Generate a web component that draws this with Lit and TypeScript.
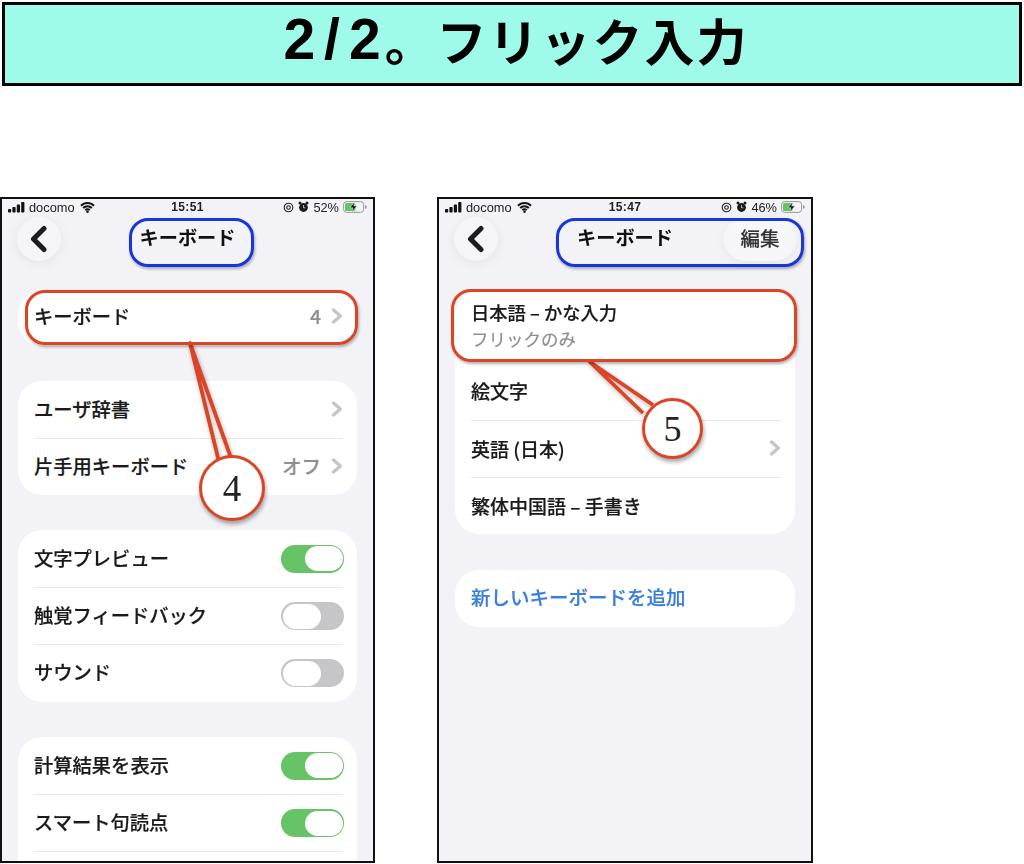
import { LitElement, html, css, svg } from 'lit';
import { customElement } from 'lit/decorators.js';

const chevron = html`<svg class="chev" width="12" height="16" viewBox="0 0 12 16"><path d="M2.5 2l6.8 6-6.8 6" fill="none" stroke="#c5c5c9" stroke-width="3.2" stroke-linecap="round" stroke-linejoin="round"/></svg>`;

const backIcon = html`<svg width="20" height="28" viewBox="0 0 20 28"><path d="M15 3.5L4.5 14 15 24.5" fill="none" stroke="#1c1c1e" stroke-width="5" stroke-linecap="round" stroke-linejoin="round"/></svg>`;

const statusBar = (time: string, pct: string) => html`
  <div class="status">
    <div class="st-left">
      <svg width="17" height="11" viewBox="0 0 17 11">
        <rect x="0" y="7" width="3.2" height="3.6" rx=".8" fill="#111"/>
        <rect x="4.4" y="5" width="3.2" height="5.6" rx=".8" fill="#111"/>
        <rect x="8.8" y="2.6" width="3.2" height="8" rx=".8" fill="#111"/>
        <rect x="13.2" y="0" width="3.2" height="10.6" rx=".8" fill="#111"/>
      </svg>
      <span>docomo</span>
      <svg class="wifi" width="15" height="11" viewBox="0 0 15 11">
        <path d="M1 3.8a9 9 0 0 1 13 0M3.2 6a6 6 0 0 1 8.6 0M5.3 8.1a3 3 0 0 1 4.4 0" fill="none" stroke="#111" stroke-width="2"/>
        <circle cx="7.5" cy="9.8" r="1.2" fill="#111"/>
      </svg>
    </div>
    <div class="st-time">${time}</div>
    <div class="st-right">
      <svg width="11" height="11" viewBox="0 0 11 11">
        <circle cx="5.5" cy="5.5" r="4.3" fill="none" stroke="#222" stroke-width="1.1"/>
        <circle cx="5.5" cy="5.5" r="1.8" fill="none" stroke="#222" stroke-width="1.1"/>
      </svg>
      <svg width="11" height="12" viewBox="0 0 11 12">
        <circle cx="5.5" cy="6.5" r="4.4" fill="#1a1a1a"/>
        <circle cx="2" cy="2" r="1.5" fill="#1a1a1a"/>
        <circle cx="9" cy="2" r="1.5" fill="#1a1a1a"/>
        <path d="M5.5 4v2.8h1.8" fill="none" stroke="#ddd" stroke-width=".8"/>
      </svg>
      <span class="pct">${pct}</span>
      <svg width="24" height="12" viewBox="0 0 24 12">
        <rect x=".6" y=".6" width="20" height="10.8" rx="3" fill="none" stroke="#999" stroke-width="1"/>
        <rect x="2" y="2" width="${pct === '52%' ? 10.5 : 9.5}" height="8" rx="1.6" fill="#62c462"/>
        <path d="M22 4.2v3.6a1.8 1.8 0 0 0 0-3.6z" fill="#999"/>
        <path d="M11.5 1L7 6.8h3L8.8 11 14 5h-3.2z" fill="#111" stroke="#f2f2f7" stroke-width=".5"/>
      </svg>
    </div>
  </div>
`;

const toggle = (on: boolean) => html`<div class="toggle ${on ? 'on' : 'off'}"><div class="thumb"></div></div>`;

const row = (label: string, right?: unknown) => html`
  <div class="row"><span class="label">${label}</span><span class="right">${right}</span></div>
`;

const valued = (value: string) => html`<span class="value">${value}</span>${chevron}`;

const legs = (ax: number, ay: number, bx: number, by: number, cx: number, cy: number) => svg`
  <path d="M${bx} ${by}L${ax} ${ay}L${cx} ${cy}" fill="none" stroke="#dc4426" stroke-width="3.8" stroke-linejoin="round"/>
`;

@customElement('app-root')
export class AppRoot extends LitElement {
  static styles = css`
    :host {
      display: block;
      width: 1024px;
      height: 864px;
      background: #fff;
      overflow: hidden;
      font-family: 'Noto Sans CJK JP', 'Liberation Sans', sans-serif;
      color: #111;
    }
    .banner {
      box-sizing: border-box;
      height: 84px;
      margin: 2px 2px 0;
      padding: 0 0 10px 8px;
      border: 3px solid #000;
      background: #9ffbe9;
      display: flex;
      align-items: center;
      justify-content: center;
      font-size: 50px;
      font-weight: 700;
      line-height: 1;
      color: #000;
      letter-spacing: 2px;
    }
    .banner .num {
      font-family: 'Liberation Sans', sans-serif;
      font-size: 57px;
      letter-spacing: 9px;
      margin-right: -5px;
    }
    .phones {
      display: flex;
      gap: 62px;
      margin-top: 111px;
    }
    .phone {
      box-sizing: border-box;
      position: relative;
      width: 375px;
      height: 666px;
      border: 2px solid #111;
      background: #f2f2f7;
      overflow: hidden;
    }
    .phone.second {
      width: 376px;
    }
    .screen {
      filter: blur(0.35px);
    }
    .status {
      display: grid;
      grid-template-columns: 1fr auto 1fr;
      align-items: center;
      box-sizing: border-box;
      height: 18px;
      padding: 0 6px 2px;
      font-family: 'Liberation Sans', sans-serif;
      font-size: 12.8px;
      color: #222;
    }
    .st-left, .st-right {
      display: flex;
      align-items: center;
      gap: 4px;
    }
    .st-right {
      justify-content: flex-end;
    }
    .wifi {
      margin-left: 1px;
    }
    .st-time {
      font-weight: 700;
      font-size: 12px;
      letter-spacing: .4px;
    }
    .nav {
      display: grid;
      grid-template-columns: 1fr auto 1fr;
      align-items: center;
      height: 44px;
      padding: 0 15px;
      margin-bottom: 30px;
    }
    .back {
      width: 44px;
      height: 44px;
      border-radius: 50%;
      background: #f5f5f7;
      box-shadow: 0 2px 12px rgba(0, 0, 0, .07);
      display: flex;
      align-items: center;
      justify-content: center;
    }
    .title {
      font-size: 19.2px;
      font-weight: 700;
      padding-bottom: 4px;
    }
    .edit {
      box-sizing: border-box;
      justify-self: end;
      width: 72px;
      height: 44px;
      padding-bottom: 4px;
      border-radius: 22px;
      background: #f6f6f8;
      box-shadow: 0 2px 12px rgba(0, 0, 0, .05);
      display: flex;
      align-items: center;
      justify-content: center;
      font-size: 19.5px;
      font-weight: 500;
      color: #333;
      -webkit-text-stroke: .2px #333;
    }
    .cards {
      display: flex;
      flex-direction: column;
      gap: 35px;
      margin: 0 16px;
    }
    .second .cards {
      gap: 36px;
    }
    .card {
      background: #fff;
      border-radius: 24px;
      padding: 0 14px 0 16px;
    }
    .card.three {
      padding-bottom: 1px;
    }
    .row {
      display: flex;
      align-items: center;
      justify-content: space-between;
      height: 57px;
      font-size: 19.3px;
      font-weight: 500;
      color: #1a1a1a;
    }
    .label {
      padding-bottom: 2px;
      -webkit-text-stroke: .2px currentColor;
    }
    .row + .row {
      border-top: 1px solid #e8e8ec;
      box-sizing: border-box;
    }
    .single .row {
      height: 55px;
    }
    .single .label {
      padding-bottom: 5px;
    }
    .right {
      display: flex;
      align-items: center;
      gap: 10px;
    }
    .chev {
      margin-bottom: 2px;
    }
    .single .right {
      padding-bottom: 3px;
    }
    .value {
      color: #8e8e93;
      font-size: 19.5px;
      padding-bottom: 3px;
      -webkit-text-stroke: .2px #8e8e93;
    }
    .toggle {
      box-sizing: border-box;
      width: 63px;
      height: 28px;
      border-radius: 14px;
      margin-right: -1px;
      display: flex;
      padding: 1.5px;
    }
    .toggle.on {
      background: #66c466;
      justify-content: flex-end;
    }
    .toggle.off {
      background: #c6c6c8;
      justify-content: flex-start;
    }
    .thumb {
      box-sizing: border-box;
      width: 38px;
      height: 25px;
      border-radius: 12.5px;
      background: #fff;
    }
    .two-line {
      box-sizing: border-box;
      height: 72px;
      padding-bottom: 4px;
      display: flex;
      flex-direction: column;
      justify-content: center;
      gap: 1px;
    }
    .two-line .main {
      font-size: 18.3px;
      font-weight: 500;
      line-height: 26px;
      color: #1a1a1a;
      -webkit-text-stroke: .2px #1a1a1a;
    }
    .two-line .sub {
      font-size: 17.5px;
      line-height: 25px;
      color: #8e8e93;
      -webkit-text-stroke: .2px #8e8e93;
    }
    .second .row {
      font-size: 19px;
    }
    .second .add .label {
      color: #3a7fdc;
      font-size: 19.5px;
    }
    .second .single .row {
      height: 57px;
    }
    .lines {
      position: absolute;
      left: 0;
      top: 0;
      filter: drop-shadow(1px 2px 2px rgba(0, 0, 0, .3));
    }
    .oval {
      position: absolute;
      box-sizing: border-box;
      border-style: solid;
      border-width: 3px;
      box-shadow: 1px 2px 3px rgba(0, 0, 0, .3);
    }
    .oval.blue {
      border-color: #1a35d8;
      border-radius: 19px;
      top: 19px;
      height: 49px;
    }
    .oval.red {
      border-color: #dc4426;
      border-radius: 20px;
    }
    .o1 { left: 127px; width: 125px; }
    .o2 { left: 23px; top: 91px; width: 333px; height: 55px; }
    .o3 { left: 117px; width: 248px; }
    .o4 { left: 12px; top: 90px; width: 346px; height: 73px; }
    .badge {
      position: absolute;
      box-sizing: border-box;
      border: 3px solid #dc4426;
      border-radius: 50%;
      background: #fff;
      box-shadow: 1px 3px 4px rgba(0, 0, 0, .35);
      display: flex;
      align-items: center;
      justify-content: center;
      font-family: 'Liberation Serif', serif;
      font-size: 37px;
      line-height: 1;
      color: #222;
    }
    .b4 { left: 197px; top: 256px; width: 66px; height: 66px; }
    .b5 { left: 203px; top: 199px; width: 61px; height: 61px; font-size: 36px; }
  `;

  render() {
    return html`
      <div class="banner"><span class="num">2/2</span>。フリック入力</div>
      <div class="phones">
        <div class="phone">
          <div class="screen">
            ${statusBar('15:51', '52%')}
            <div class="nav">
              <div class="back">${backIcon}</div>
              <div class="title">キーボード</div>
            </div>
            <div class="cards">
              <div class="card single">${row('キーボード', valued('4'))}</div>
              <div class="card">
                ${row('ユーザ辞書', chevron)}
                ${row('片手用キーボード', valued('オフ'))}
              </div>
              <div class="card three">
                ${row('文字プレビュー', toggle(true))}
                ${row('触覚フィードバック', toggle(false))}
                ${row('サウンド', toggle(false))}
              </div>
              <div class="card">
                ${row('計算結果を表示', toggle(true))}
                ${row('スマート句読点', toggle(true))}
                ${row('', '')}
              </div>
            </div>
          </div>
          <svg class="lines" width="371" height="662">${legs(188, 144, 217, 263, 229, 259)}</svg>
          <div class="oval blue o1"></div>
          <div class="oval red o2"></div>
          <div class="badge b4">4</div>
        </div>
        <div class="phone second">
          <div class="screen">
            ${statusBar('15:47', '46%')}
            <div class="nav">
              <div class="back">${backIcon}</div>
              <div class="title">キーボード</div>
              <div class="edit">編集</div>
            </div>
            <div class="cards">
              <div class="card">
                <div class="two-line">
                  <div class="main">日本語 – かな入力</div>
                  <div class="sub">フリックのみ</div>
                </div>
                ${row('絵文字')}
                ${row('英語 (日本)', chevron)}
                ${row('繁体中国語 – 手書き')}
              </div>
              <div class="card single add">${row('新しいキーボードを追加')}</div>
            </div>
          </div>
          <svg class="lines" width="372" height="662">${legs(151, 163, 204, 214, 214, 206)}</svg>
          <div class="oval blue o3"></div>
          <div class="oval red o4"></div>
          <div class="badge b5">5</div>
        </div>
      </div>
    `;
  }
}
